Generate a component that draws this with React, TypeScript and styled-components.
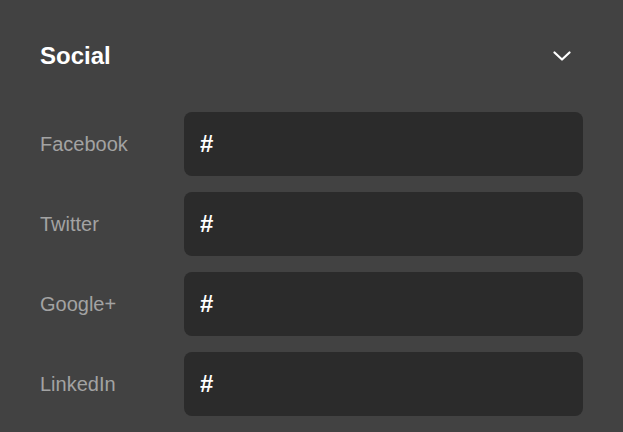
import React from "react";
import styled, { createGlobalStyle } from "styled-components";

const Global = createGlobalStyle`
  html, body { margin: 0; padding: 0; background: #424242; }
  body { font-family: "Liberation Sans", Arial, sans-serif; }
`;

const Panel = styled.section`
  box-sizing: border-box;
  width: 623px;
  height: 432px;
  padding: 40px 40px 0;
  background: #424242;
  display: flex;
  flex-direction: column;
  gap: 40px;
  overflow: hidden;
`;

const Header = styled.div`
  height: 32px;
  flex-shrink: 0;
  display: flex;
  align-items: center;
  justify-content: space-between;
`;

const Title = styled.h2`
  margin: 0;
  font-size: 24px;
  font-weight: 700;
  color: #ffffff;
`;

const Toggle = styled.button`
  width: 24px;
  height: 24px;
  padding: 0;
  margin-right: 9px;
  border: none;
  background: transparent;
  display: flex;
  align-items: center;
  justify-content: center;
  cursor: pointer;
`;

const Rows = styled.div`
  display: flex;
  flex-direction: column;
  gap: 16px;
`;

const Row = styled.label`
  display: grid;
  grid-template-columns: 144px 1fr;
  align-items: center;
`;

const Label = styled.span`
  font-size: 20px;
  color: #a3a3a3;
`;

const Input = styled.input`
  box-sizing: border-box;
  height: 64px;
  width: 100%;
  border: none;
  border-radius: 8px;
  background: #2b2b2b;
  padding: 0 16px;
  font-family: "Liberation Sans", Arial, sans-serif;
  font-size: 24px;
  font-weight: 700;
  color: #ffffff;
  outline: none;
`;

const links = ["Facebook", "Twitter", "Google+", "LinkedIn"];

export default function App() {
  return (
    <>
      <Global />
      <Panel>
        <Header>
          <Title>Social</Title>
          <Toggle aria-label="Collapse">
            <svg width="18" height="10" viewBox="0 0 18 10" fill="none">
              <path d="M1.5 1.5L9 8.5L16.5 1.5" stroke="#fff" strokeWidth="2.2" strokeLinecap="round" strokeLinejoin="round" />
            </svg>
          </Toggle>
        </Header>
        <Rows>
          {links.map((l) => (
            <Row key={l}>
              <Label>{l}</Label>
              <Input defaultValue="#" />
            </Row>
          ))}
        </Rows>
      </Panel>
    </>
  );
}
